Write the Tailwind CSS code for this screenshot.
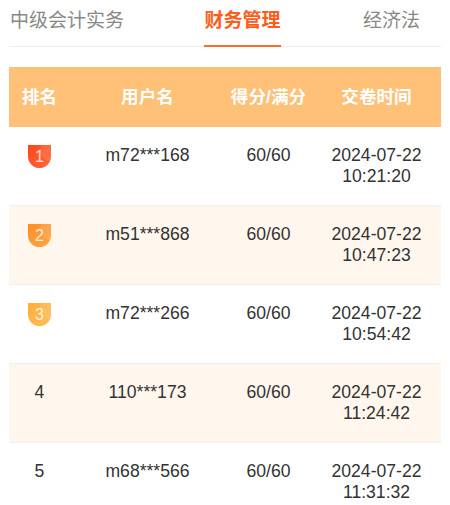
<!DOCTYPE html>
<html lang="zh">
<head>
<meta charset="utf-8">
<script src="https://cdn.jsdelivr.net/npm/@tailwindcss/browser@4"></script>
</head>
<body class="bg-white font-['Liberation_Sans','Noto_Sans_CJK_SC',sans-serif] overflow-hidden">
<div class="w-[450px] h-[505px] px-[9px] overflow-hidden">
  <div class="h-[47px] flex justify-between border-b border-[#eeeeee] text-[19px] leading-[42px] text-[#888888]">
    <div class="pl-px">中级会计实务</div>
    <div class="h-[47px] mr-[2px] border-b-2 border-[#ff6a26] font-bold text-[#ff5c1a]">财务管理</div>
    <div class="pr-[21px]">经济法</div>
  </div>
  <div class="mt-[20px] h-[60px] grid grid-cols-[61px_155px_87px_129px] items-center text-center bg-[#ffc077] text-white font-bold text-[17.6px]">
    <div>排名</div><div>用户名</div><div>得分/满分</div><div>交卷时间</div>
  </div>
  <div class="h-[79px] pt-[18px] grid grid-cols-[61px_155px_87px_129px] text-center text-[17.6px] leading-[21px] text-[#333333] border-b border-[#eeeeee]">
    <div class="flex justify-center">
      <div class="relative w-[23px] h-[23px] rounded-b-[12px] overflow-hidden bg-gradient-to-br from-[#ff4318] to-[#ff6a3c] text-white/80 text-[16px] leading-[23px]">
        <div class="absolute left-[12px] -top-[6px] w-[22px] h-[22px] rounded-full bg-white/10"></div>
        <span class="relative">1</span>
      </div>
    </div>
    <div>m72***168</div><div>60/60</div><div>2024-07-22<br>10:21:20</div>
  </div>
  <div class="h-[79px] pt-[18px] grid grid-cols-[61px_155px_87px_129px] text-center text-[17.6px] leading-[21px] text-[#333333] bg-[#fff6ed] border-b border-[#eeeeee]">
    <div class="flex justify-center">
      <div class="relative w-[23px] h-[23px] rounded-b-[12px] overflow-hidden bg-gradient-to-br from-[#ff8f22] to-[#ffa547] text-white/80 text-[16px] leading-[23px]">
        <div class="absolute left-[12px] -top-[6px] w-[22px] h-[22px] rounded-full bg-white/10"></div>
        <span class="relative">2</span>
      </div>
    </div>
    <div>m51***868</div><div>60/60</div><div>2024-07-22<br>10:47:23</div>
  </div>
  <div class="h-[79px] pt-[18px] grid grid-cols-[61px_155px_87px_129px] text-center text-[17.6px] leading-[21px] text-[#333333] border-b border-[#eeeeee]">
    <div class="flex justify-center">
      <div class="relative w-[23px] h-[23px] rounded-b-[12px] overflow-hidden bg-gradient-to-br from-[#ffad36] to-[#ffbe58] text-white/80 text-[16px] leading-[23px]">
        <div class="absolute left-[12px] -top-[6px] w-[22px] h-[22px] rounded-full bg-white/10"></div>
        <span class="relative">3</span>
      </div>
    </div>
    <div>m72***266</div><div>60/60</div><div>2024-07-22<br>10:54:42</div>
  </div>
  <div class="h-[79px] pt-[18px] grid grid-cols-[61px_155px_87px_129px] text-center text-[17.6px] leading-[21px] text-[#333333] bg-[#fff6ed] border-b border-[#eeeeee]">
    <div>4</div><div>110***173</div><div>60/60</div><div>2024-07-22<br>11:24:42</div>
  </div>
  <div class="h-[79px] pt-[18px] grid grid-cols-[61px_155px_87px_129px] text-center text-[17.6px] leading-[21px] text-[#333333]">
    <div>5</div><div>m68***566</div><div>60/60</div><div>2024-07-22<br>11:31:32</div>
  </div>
</div>
</body>
</html>
